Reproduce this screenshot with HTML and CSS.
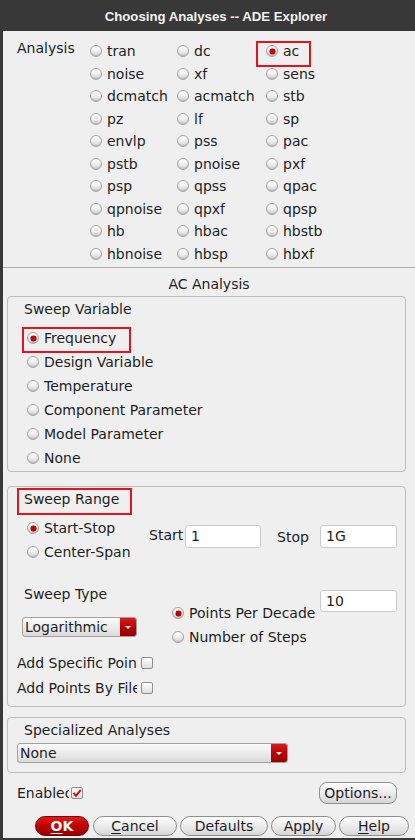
FILE: index.html
```html
<!DOCTYPE html>
<html>
<head>
<meta charset="utf-8">
<title>Choosing Analyses -- ADE Explorer</title>
<link rel="stylesheet" href="styles.css">
</head>
<body>
<div class="window">
  <div class="titlebar">Choosing Analyses -- ADE Explorer</div>
  <div class="client">
    <div class="analysis">
      <div class="analysis-label">Analysis</div>
      <div class="analysis-grid">
        <label class="radio"><span class="rb"></span>tran</label>
        <label class="radio"><span class="rb"></span>dc</label>
        <label class="radio hl hl-ac"><span class="rb on"></span>ac</label>
        <label class="radio"><span class="rb"></span>noise</label>
        <label class="radio"><span class="rb"></span>xf</label>
        <label class="radio"><span class="rb"></span>sens</label>
        <label class="radio"><span class="rb"></span>dcmatch</label>
        <label class="radio"><span class="rb"></span>acmatch</label>
        <label class="radio"><span class="rb"></span>stb</label>
        <label class="radio"><span class="rb"></span>pz</label>
        <label class="radio"><span class="rb"></span>lf</label>
        <label class="radio"><span class="rb"></span>sp</label>
        <label class="radio"><span class="rb"></span>envlp</label>
        <label class="radio"><span class="rb"></span>pss</label>
        <label class="radio"><span class="rb"></span>pac</label>
        <label class="radio"><span class="rb"></span>pstb</label>
        <label class="radio"><span class="rb"></span>pnoise</label>
        <label class="radio"><span class="rb"></span>pxf</label>
        <label class="radio"><span class="rb"></span>psp</label>
        <label class="radio"><span class="rb"></span>qpss</label>
        <label class="radio"><span class="rb"></span>qpac</label>
        <label class="radio"><span class="rb"></span>qpnoise</label>
        <label class="radio"><span class="rb"></span>qpxf</label>
        <label class="radio"><span class="rb"></span>qpsp</label>
        <label class="radio"><span class="rb"></span>hb</label>
        <label class="radio"><span class="rb"></span>hbac</label>
        <label class="radio"><span class="rb"></span>hbstb</label>
        <label class="radio"><span class="rb"></span>hbnoise</label>
        <label class="radio"><span class="rb"></span>hbsp</label>
        <label class="radio"><span class="rb"></span>hbxf</label>
      </div>
    </div>

    <div class="caption">AC Analysis</div>

    <div class="group group-var">
      <div class="group-title">Sweep Variable</div>
      <div class="radio-list">
        <label class="radio row24 hl hl-freq"><span class="rb on"></span>Frequency</label>
        <label class="radio row24"><span class="rb"></span>Design Variable</label>
        <label class="radio row24"><span class="rb"></span>Temperature</label>
        <label class="radio row24"><span class="rb"></span>Component Parameter</label>
        <label class="radio row24"><span class="rb"></span>Model Parameter</label>
        <label class="radio row24"><span class="rb"></span>None</label>
      </div>
    </div>

    <div class="group group-range">
      <div class="group-title"><span class="hl hl-range">Sweep Range</span></div>
      <div class="range-top">
        <div class="range-radios">
          <label class="radio row24"><span class="rb on"></span>Start-Stop</label>
          <label class="radio row24"><span class="rb"></span>Center-Span</label>
        </div>
        <div class="field">
          <span class="field-label start-label">Start</span>
          <span class="input in-start">1</span>
          <span class="field-label stop-label">Stop</span>
          <span class="input in-stop">1G</span>
        </div>
      </div>
      <div class="range-mid">
        <div class="type-col">
          <div class="type-label">Sweep Type</div>
          <div class="combo combo-type"><span class="combo-text">Logarithmic</span><span class="combo-arrow"><span class="tri"></span></span></div>
        </div>
        <div class="step-col">
          <div class="step-radios">
            <label class="radio row24"><span class="rb on"></span>Points Per Decade</label>
            <label class="radio row24"><span class="rb"></span>Number of Steps</label>
          </div>
          <span class="input in-steps">10</span>
        </div>
      </div>
      <div class="range-add">
        <div class="add-row"><span class="add-label">Add Specific Points</span><span class="cb"></span></div>
        <div class="add-row"><span class="add-label">Add Points By File</span><span class="cb"></span></div>
      </div>
    </div>

    <div class="group group-spec">
      <div class="group-title">Specialized Analyses</div>
      <div class="combo combo-spec"><span class="combo-text">None</span><span class="combo-arrow"><span class="tri"></span></span></div>
    </div>

    <div class="enable-row">
      <span class="enable-label">Enabled</span>
      <span class="cb checked"><svg width="10" height="10" viewBox="0 0 10 10"><path d="M1.5 4.8 L4 7.6 L8.8 1.8" fill="none" stroke="#d40f0f" stroke-width="2"/></svg></span>
      <span class="btn btn-options">Options...</span>
    </div>

    <div class="buttons">
      <span class="btn btn-ok"><u>O</u>K</span>
      <span class="btn btn-cancel"><u>C</u>ancel</span>
      <span class="btn btn-defaults">Defaults</span>
      <span class="btn btn-apply">Apply</span>
      <span class="btn btn-help"><u>H</u>elp</span>
    </div>
  </div>
</div>
</body>
</html>
```

FILE: styles.css
```css
* { box-sizing: border-box; }

html, body {
  margin: 0;
  padding: 0;
}

body {
  background: #383838;
  font-family: "DejaVu Sans", sans-serif;
  font-size: 14px;
  color: #1e1e1e;
}

.window {
  width: 415px;
  height: 840px;
  display: flex;
  flex-direction: column;
  background: #383838;
}

.titlebar {
  height: 31px;
  padding-top: 2px;
  padding-left: 17px;
  line-height: 29px;
  text-align: center;
  color: #f2f2f2;
  font-family: "Liberation Sans", sans-serif;
  font-weight: bold;
  font-size: 13.2px;
}

.client {
  flex: 1;
  margin: 0 0 2px 3px;
  background: #efefef;
  display: flex;
  flex-direction: column;
}

/* Analysis block */
.analysis {
  display: flex;
  padding: 9px 0 2px 14px;
  border-bottom: 1px solid #a9a9a9;
}

.analysis-label {
  width: 73px;
  line-height: 22.5px;
  margin-top: -3px;
}

.analysis-grid {
  display: grid;
  grid-template-columns: 87px 89px auto;
  grid-auto-rows: 22.5px;
}

.radio {
  display: flex;
  align-items: center;
  white-space: nowrap;
}

.row24 { height: 24px; }

.rb {
  flex: none;
  position: relative;
  width: 12px;
  height: 12px;
  margin-right: 5px;
  border-radius: 50%;
  border: 1px solid #a3a3a3;
  background: linear-gradient(#ffffff 0%, #f2f2f2 45%, #d2d2d2 100%);
  box-shadow: inset 0 -1px 1px rgba(0,0,0,0.12);
}

.rb.on::after {
  content: "";
  position: absolute;
  left: 2.5px;
  top: 2.5px;
  width: 5px;
  height: 5px;
  border-radius: 50%;
  background: #cc0000;
  box-shadow: 0 0 0 0.5px #8a0000;
}

/* red annotation boxes */
.hl { position: relative; }
.hl::after {
  content: "";
  position: absolute;
  border: 2px solid #e3141e;
  pointer-events: none;
}
.hl-ac::after { left: -10px; top: 1px; width: 51px; height: 22px; }
.hl-freq::after { left: -5px; top: 1px; width: 105px; height: 22px; }
.hl-range::after { left: -7px; top: -3px; width: 111px; height: 23px; }

.caption {
  text-align: center;
  padding-top: 7px;
  line-height: 18px;
}

/* group boxes */
.group {
  margin: 3px 9px 0 4px;
  border: 1px solid #bdbdbd;
  border-radius: 4px;
}

.group-title {
  padding: 3px 0 0 16px;
  line-height: 18px;
}

.group-var { padding-bottom: 1px; }

.radio-list {
  margin-top: 8px;
  padding-left: 19px;
}

.group-range {
  margin-top: 14px;
  padding-bottom: 6px;
}

.range-top {
  display: flex;
  margin-top: 8px;
}

.range-radios {
  width: 141px;
  padding-left: 19px;
}

.field {
  display: flex;
  align-items: center;
  height: 23px;
  margin-top: 9px;
}

.field-label { display: block; }
.start-label { width: 36px; margin-top: -4px; }
.stop-label { width: 43px; margin-left: 16px; }

.input {
  display: block;
  height: 23px;
  line-height: 21px;
  padding-left: 5px;
  background: #ffffff;
  border: 1px solid #c9c9c9;
  border-radius: 3px;
}
.in-start { width: 76px; }
.in-stop { width: 77px; }
.in-steps { width: 77px; height: 22px; line-height: 20px; margin-top: 5px; }

.range-mid {
  display: flex;
  margin-top: 21px;
}

.type-col {
  width: 164px;
  padding-left: 14px;
}

.type-label {
  line-height: 18px;
  margin-left: 2px;
}

.combo {
  display: flex;
  height: 20px;
  border: 1px solid #a0a0a0;
  border-radius: 3px;
  background: linear-gradient(#fbfbfb, #e9e9e9 60%, #d9d9d9);
  overflow: hidden;
}
.combo-text {
  flex: 1;
  line-height: 18px;
  padding-left: 2px;
  white-space: nowrap;
}
.combo-arrow {
  width: 16px;
  display: flex;
  align-items: center;
  justify-content: center;
  background: linear-gradient(#dc1a1a, #b00000 60%, #990000);
}
.tri {
  width: 0;
  height: 0;
  border-left: 3px solid transparent;
  border-right: 3px solid transparent;
  border-top: 3px solid #ffffff;
}

.combo-type { width: 115px; margin-top: 14px; }

.step-col {
  display: flex;
}
.step-radios {
  width: 148px;
  margin-top: 16px;
}

.range-add {
  margin-top: 1px;
  padding-left: 9px;
}
.add-row {
  display: flex;
  align-items: center;
  height: 25px;
}
.add-label {
  width: 120px;
  overflow: hidden;
  white-space: nowrap;
}

.cb {
  flex: none;
  width: 12px;
  height: 12px;
  margin-left: 4px;
  border: 1px solid #8e8e8e;
  border-radius: 2px;
  background: linear-gradient(#ffffff, #dedede);
  display: flex;
  align-items: center;
  justify-content: center;
}

.group-spec {
  margin-top: 10px;
  padding-bottom: 9px;
}
.combo-spec {
  width: 271px;
  margin: 4px 0 0 9px;
}

.enable-row {
  display: flex;
  align-items: center;
  height: 22px;
  margin-top: 9px;
  padding-left: 14px;
}
.enable-label {
  width: 52px;
  overflow: hidden;
  white-space: nowrap;
}
.cb.checked { margin-left: 2px; }

.btn {
  display: block;
  height: 20px;
  line-height: 18px;
  text-align: center;
  border: 1px solid #8f8f8f;
  border-radius: 10px;
  background: linear-gradient(#fdfdfd, #ececec 50%, #d6d6d6);
  color: #1e1e1e;
  white-space: nowrap;
}
.btn u { text-decoration-thickness: 1px; text-underline-offset: 2px; }

.btn-options {
  margin-left: auto;
  margin-right: 18px;
  width: 78px;
  height: 22px;
  line-height: 20px;
  border-radius: 8px;
}

.buttons {
  display: flex;
  margin-top: 12px;
  padding-left: 32px;
}
.btn-ok {
  width: 54px;
  background: linear-gradient(#e21818, #bb0000 55%, #9a0000);
  border-color: #7a0000;
  color: #ffffff;
  font-weight: bold;
}
.btn-cancel { width: 84px; margin-left: 4px; }
.btn-defaults { width: 88px; margin-left: 3px; }
.btn-apply { width: 65px; margin-left: 3px; }
.btn-help { width: 70px; margin-left: 3px; }
```
